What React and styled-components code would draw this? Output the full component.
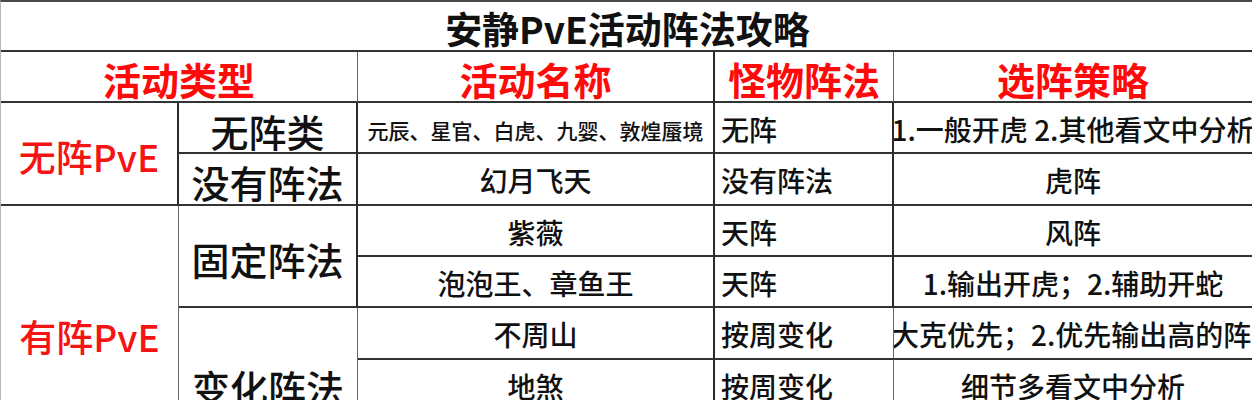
import React from "react";
import styled, { createGlobalStyle, css } from "styled-components";

const Global = createGlobalStyle`
  html, body { margin: 0; padding: 0; background: #fff; overflow: hidden; }
  body { font-family: "Noto Sans CJK SC", "Noto Sans", sans-serif; color: #111; }
`;

const Sheet = styled.div`
  display: grid;
  width: 1254px;
  grid-template-columns: 178px 179px 357px 179px 360px;
  grid-template-rows: 50px 51px 51px 52px 51px 51px 52px 51px 51px;
  border-top: 2px solid #4a4a4a;
  border-left: 1px solid #b8b8b8;
  box-sizing: border-box;
`;

const Cell = styled.div`
  box-sizing: border-box;
  grid-column: ${(p) => p.$col} / span ${(p) => p.$colSpan || 1};
  grid-row: ${(p) => p.$row} / span ${(p) => p.$rowSpan || 1};
  border-right: ${(p) => (p.$thin ? "1px solid #666" : "2px solid #2b2b2b")};
  border-bottom: 2px solid #333;
  display: flex;
  align-items: center;
  justify-content: ${(p) => (p.$left ? "flex-start" : "center")};
  padding: ${(p) => (p.$left ? "3px 0 0 6px" : "3px 0 0 0")};
  white-space: nowrap;
  line-height: 1.25;
  color: #111;
  font-weight: 500;
  ${(p) =>
    p.$clip &&
    css`
      overflow: hidden;
    `}
`;

const TitleCell = styled(Cell)`
  font-size: 37px;
  font-weight: 700;
  border-right: none;
  padding-top: 5px;
`;

const HeadCell = styled(Cell)`
  font-size: 38px;
  font-weight: 700;
  color: #ff0a0a;
  padding-top: 4px;
`;

const CategoryCell = styled(Cell)`
  font-size: 37px;
  color: #f51414;
  padding-top: 6px;
`;

const TypeCell = styled(Cell)`
  font-size: 38px;
  padding-top: 6px;
`;

const TextCell = styled(Cell)`
  font-size: ${(p) => (p.$small ? "21px" : "28px")};
  ${(p) =>
    p.$small &&
    css`
      padding-top: 6px;
    `}
`;

export default function App() {
  return (
    <>
      <Global />
      <Sheet>
        <TitleCell $col={1} $row={1} $colSpan={5}>安静PvE活动阵法攻略</TitleCell>

        <HeadCell $col={1} $row={2} $colSpan={2} $thin>活动类型</HeadCell>
        <HeadCell $col={3} $row={2}>活动名称</HeadCell>
        <HeadCell $col={4} $row={2} $thin>怪物阵法</HeadCell>
        <HeadCell $col={5} $row={2}>选阵策略</HeadCell>

        <CategoryCell $col={1} $row={3} $rowSpan={2}>无阵PvE</CategoryCell>
        <TypeCell $col={2} $row={3}>无阵类</TypeCell>
        <TextCell $col={3} $row={3} $small>元辰、星官、白虎、九婴、敦煌蜃境</TextCell>
        <TextCell $col={4} $row={3} $left>无阵</TextCell>
        <TextCell $col={5} $row={3} $clip>1.一般开虎 2.其他看文中分析</TextCell>

        <TypeCell $col={2} $row={4}>没有阵法</TypeCell>
        <TextCell $col={3} $row={4}>幻月飞天</TextCell>
        <TextCell $col={4} $row={4} $left>没有阵法</TextCell>
        <TextCell $col={5} $row={4}>虎阵</TextCell>

        <CategoryCell $col={1} $row={5} $rowSpan={5} $thin>有阵PvE</CategoryCell>
        <TypeCell $col={2} $row={5} $rowSpan={2}>固定阵法</TypeCell>
        <TextCell $col={3} $row={5}>紫薇</TextCell>
        <TextCell $col={4} $row={5} $left>天阵</TextCell>
        <TextCell $col={5} $row={5}>风阵</TextCell>

        <TextCell $col={3} $row={6}>泡泡王、章鱼王</TextCell>
        <TextCell $col={4} $row={6} $left>天阵</TextCell>
        <TextCell $col={5} $row={6}>1.输出开虎；2.辅助开蛇</TextCell>

        <TypeCell $col={2} $row={7} $rowSpan={3} $thin>变化阵法</TypeCell>
        <TextCell $col={3} $row={7}>不周山</TextCell>
        <TextCell $col={4} $row={7} $left $thin>按周变化</TextCell>
        <TextCell $col={5} $row={7} $clip>1.大克优先；2.优先输出高的阵法</TextCell>

        <TextCell $col={3} $row={8}>地煞</TextCell>
        <TextCell $col={4} $row={8} $left $thin>按周变化</TextCell>
        <TextCell $col={5} $row={8}>细节多看文中分析</TextCell>

        <TextCell $col={3} $row={9}>天罡</TextCell>
        <TextCell $col={4} $row={9} $left $thin>按周变化</TextCell>
        <TextCell $col={5} $row={9}>细节多看文中分析</TextCell>
      </Sheet>
    </>
  );
}
